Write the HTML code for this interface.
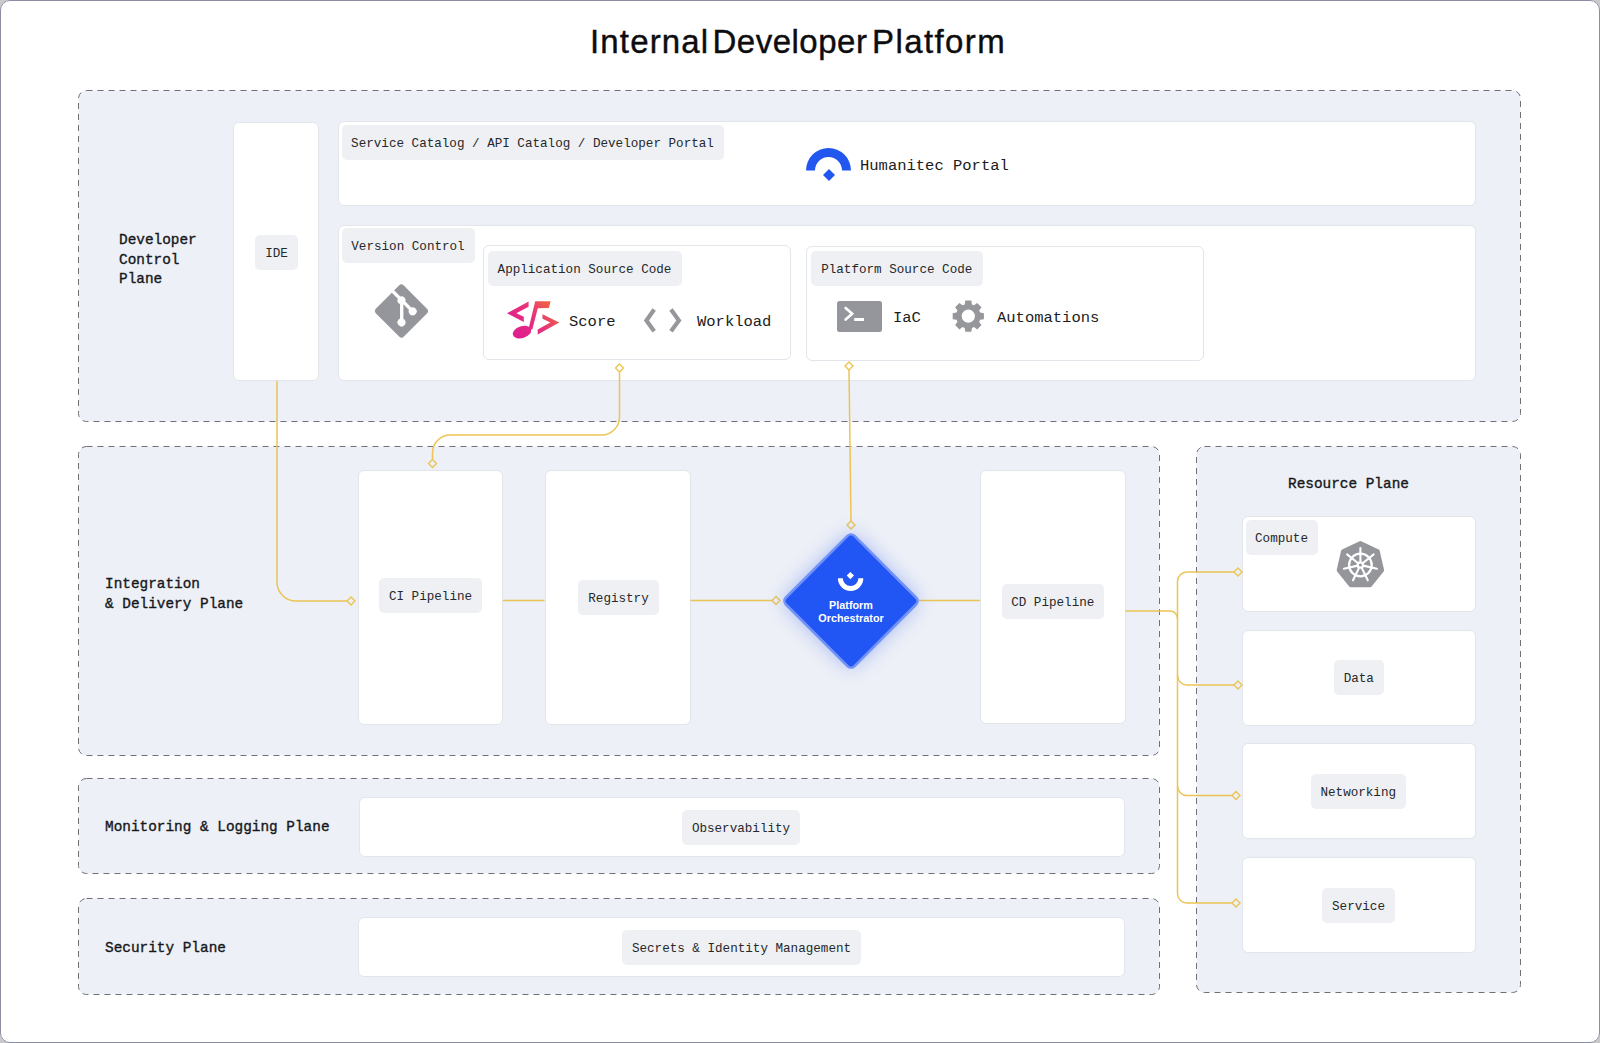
<!DOCTYPE html>
<html><head><meta charset="utf-8">
<style>
html,body{margin:0;padding:0;}
body{width:1600px;height:1043px;position:relative;overflow:hidden;background:#c9c9cc;font-family:"Liberation Mono",monospace;}
#page{position:absolute;left:0;top:0;width:1600px;height:1043px;background:#fff;border-radius:10px;overflow:hidden;}
#frame{position:absolute;left:0;top:0;width:1600px;height:1043px;box-sizing:border-box;border:1px solid #8c8ca2;border-radius:10px;z-index:50;pointer-events:none;}
.abs{position:absolute;}
.box{position:absolute;background:#fff;border:1px solid #e2e5ea;border-radius:6px;box-sizing:border-box;}
.chip{position:absolute;background:#eef0f3;border-radius:5px;box-sizing:border-box;height:35px;line-height:38px;font-size:12.6px;color:#26282c;text-align:center;white-space:nowrap;}
.lbl{position:absolute;font-weight:normal;-webkit-text-stroke:0.35px #16181c;font-size:14.4px;color:#16181c;white-space:nowrap;line-height:19.4px;margin-top:2.3px;}
.big{position:absolute;font-size:15.5px;color:#1b1d21;white-space:nowrap;line-height:20px;margin-top:1.5px;}
svg{position:absolute;left:0;top:0;}
</style></head><body>
<div id="page">
<svg width="1600" height="1043" style="z-index:0">
  <g fill="#edf0f6" stroke="#6f7176" stroke-width="1" stroke-dasharray="6 5">
    <rect x="78.5" y="90.5" width="1442" height="331" rx="8"/>
    <rect x="78.5" y="446.5" width="1081" height="309" rx="8"/>
    <rect x="1196.5" y="446.5" width="324" height="546" rx="8"/>
    <rect x="78.5" y="778.5" width="1081" height="95" rx="8"/>
    <rect x="78.5" y="898.5" width="1081" height="96" rx="8"/>
  </g>
</svg>

<div class="abs" style="left:0;top:18px;width:1600px;height:48px;font-family:'Liberation Sans',sans-serif;font-size:33px;color:#0d0d0f;line-height:48px;-webkit-text-stroke:0.4px #0d0d0f;white-space:nowrap">
<span class="abs" style="left:590px;letter-spacing:1.15px">Internal</span><span class="abs" style="left:712.5px;letter-spacing:0.5px">Developer</span><span class="abs" style="left:872px;letter-spacing:1.4px">Platform</span></div>

<!-- Developer control plane -->
<div class="lbl" style="left:119px;top:229px">Developer<br>Control<br>Plane</div>
<div class="box" style="left:233px;top:122px;width:86px;height:259px"></div>
<div class="chip" style="left:255px;top:235px;width:43px">IDE</div>

<div class="box" style="left:338px;top:121px;width:1137.5px;height:85px"></div>
<div class="chip" style="left:341.5px;top:124.5px;width:382px">Service Catalog / API Catalog / Developer Portal</div>

<div class="box" style="left:338px;top:225px;width:1137.5px;height:156px"></div>
<div class="chip" style="left:341.5px;top:228px;width:133px">Version Control</div>

<div class="box" style="left:482.5px;top:245px;width:308px;height:115px"></div>
<div class="chip" style="left:487.5px;top:251px;width:194px">Application Source Code</div>

<div class="box" style="left:805.5px;top:245.5px;width:398px;height:115.5px"></div>
<div class="chip" style="left:811px;top:251px;width:171.5px">Platform Source Code</div>

<!-- Integration -->
<div class="lbl" style="left:105px;top:573px">Integration<br>&amp; Delivery Plane</div>
<div class="box" style="left:357.5px;top:470px;width:145.5px;height:254.5px"></div>
<div class="chip" style="left:379px;top:578px;width:103px">CI Pipeline</div>
<div class="box" style="left:544.5px;top:470px;width:146px;height:254.5px"></div>
<div class="chip" style="left:578px;top:580px;width:81px">Registry</div>
<div class="box" style="left:980px;top:470px;width:145.5px;height:254px"></div>
<div class="chip" style="left:1001.5px;top:584px;width:102.5px">CD Pipeline</div>

<!-- Resource -->
<div class="lbl" style="left:1288px;top:473px">Resource Plane</div>
<div class="box" style="left:1242px;top:516px;width:233.5px;height:96px"></div>
<div class="chip" style="left:1245.5px;top:519.5px;width:72px">Compute</div>
<div class="box" style="left:1242px;top:629.5px;width:233.5px;height:96px"></div>
<div class="chip" style="left:1334px;top:660px;width:49.5px">Data</div>
<div class="box" style="left:1242px;top:743px;width:233.5px;height:96px"></div>
<div class="chip" style="left:1311px;top:774px;width:94.5px">Networking</div>
<div class="box" style="left:1242px;top:857px;width:233.5px;height:96px"></div>
<div class="chip" style="left:1322px;top:888px;width:73px">Service</div>

<!-- Monitoring / Security -->
<div class="lbl" style="left:105px;top:815.5px">Monitoring &amp; Logging Plane</div>
<div class="box" style="left:358.5px;top:797px;width:766px;height:60px"></div>
<div class="chip" style="left:682px;top:810px;width:118px">Observability</div>
<div class="lbl" style="left:105px;top:936.5px">Security Plane</div>
<div class="box" style="left:357.5px;top:917px;width:767.5px;height:59.5px"></div>
<div class="chip" style="left:622px;top:929.5px;width:239px">Secrets &amp; Identity Management</div>

<div class="big" style="left:860px;top:154px">Humanitec Portal</div>
<div class="big" style="left:569px;top:310px">Score</div>
<div class="big" style="left:697px;top:310px">Workload</div>
<div class="big" style="left:893px;top:306px">IaC</div>
<div class="big" style="left:997px;top:306px">Automations</div>

<svg width="1600" height="1043" style="z-index:10">
  <defs>
    <linearGradient id="sg" x1="0" y1="1" x2="1" y2="0">
      <stop offset="0" stop-color="#e0218f"/>
      <stop offset="0.45" stop-color="#e8267f"/>
      <stop offset="1" stop-color="#f4743a"/>
    </linearGradient>
    <filter id="glow" x="-50%" y="-50%" width="200%" height="200%">
      <feGaussianBlur in="SourceAlpha" stdDeviation="9"/>
      <feFlood flood-color="#4a6cf5" flood-opacity="0.55"/>
      <feComposite operator="in" in2="" />
    </filter>
  </defs>
  <!-- connectors -->
  <g fill="none" stroke="#ecc455" stroke-width="1.5">
    <path d="M277 381 V582 A19 19 0 0 0 296 601 H347"/>
    <path d="M619.5 372 V417 A18 18 0 0 1 601.5 435 H450.5 A18 18 0 0 0 432.5 453 V459.5"/>
    <path d="M849 370 L851 521"/>
    <path d="M503 600.5 H544.5"/>
    <path d="M690.5 600.5 H772"/>
    <path d="M919 600.5 H980"/>
    <path d="M1125.5 611 H1170 A7.5 7.5 0 0 1 1177.5 618.5"/>
    <path d="M1234 572 H1187 A9.5 9.5 0 0 0 1177.5 581.5 V893.5 A9.5 9.5 0 0 0 1187 903 H1232"/>
    <path d="M1177.5 675.5 A9.5 9.5 0 0 0 1187 685 H1234"/>
    <path d="M1177.5 786 A9.5 9.5 0 0 0 1187 795.5 H1232"/>
    <g stroke-width="1.4">
      <path d="M351 597 L355 601 L351 605 L347 601Z"/>
      <path d="M619.5 364 L623.5 368 L619.5 372 L615.5 368Z"/>
      <path d="M432.5 459.5 L436.5 463.5 L432.5 467.5 L428.5 463.5Z"/>
      <path d="M849 362 L853 366 L849 370 L845 366Z"/>
      <path d="M851 521 L855 525 L851 529 L847 525Z"/>
      <path d="M776 596.5 L780 600.5 L776 604.5 L772 600.5Z"/>
      <path d="M1238 568 L1242 572 L1238 576 L1234 572Z"/>
      <path d="M1238 681 L1242 685 L1238 689 L1234 685Z"/>
      <path d="M1236 791.5 L1240 795.5 L1236 799.5 L1232 795.5Z"/>
      <path d="M1236 899 L1240 903 L1236 907 L1232 903Z"/>
    </g>
  </g>

  <!-- Humanitec logo -->
  <g fill="#2157ef">
    <path d="M806 170.5 A22.5 22.5 0 0 1 851 170.5 H842 A13.5 13.5 0 0 0 815 170.5 Z"/>
    <path d="M829 169 L835 175 L829 181 L823 175 Z"/>
  </g>

  <!-- git logo -->
  <g transform="translate(375,284.5) scale(0.576)" fill="#95969b">
    <path d="M90.156 41.965 50.036 1.848a5.918 5.918 0 0 0-8.372 0l-8.328 8.332 10.566 10.566a7.03 7.03 0 0 1 7.23 1.684 7.034 7.034 0 0 1 1.669 7.277l10.187 10.184a7.028 7.028 0 0 1 7.278 1.672 7.04 7.04 0 0 1 0 9.957 7.05 7.05 0 0 1-9.965 0 7.044 7.044 0 0 1-1.528-7.66l-9.5-9.497V59.36a7.04 7.04 0 0 1 1.86 11.29 7.04 7.04 0 0 1-9.957 0 7.04 7.04 0 0 1 0-9.958 7.06 7.06 0 0 1 2.304-1.539V33.926a7.049 7.049 0 0 1-3.82-9.234L29.242 14.272 1.73 41.777a5.925 5.925 0 0 0 0 8.371L41.852 90.27a5.925 5.925 0 0 0 8.37 0l39.934-39.934a5.925 5.925 0 0 0 0-8.371"/>
  </g>

  <!-- score logo -->
  <g transform="translate(490,290)">
    <defs>
      <linearGradient id="sg2" gradientUnits="userSpaceOnUse" x1="28" y1="44" x2="64" y2="14">
        <stop offset="0" stop-color="#e01f8e"/>
        <stop offset="0.5" stop-color="#e6337c"/>
        <stop offset="1" stop-color="#f26a38"/>
      </linearGradient>
    </defs>
    <g fill="url(#sg2)">
      <path d="M38.6 11.6 L38.6 16.7 L26.3 23.2 L33.8 26.8 L33.8 32 L17 23.2 Z"/>
      <path d="M52.5 24.3 L69.3 32.4 L47.7 44.4 L47.7 39.6 L60.3 32.4 L52.5 28.8 Z"/>
      <path d="M45.2 11.2 L60.6 11.2 L58.9 18 L47.8 18.2 L42.3 39.5 L38.4 39.5 Z"/>
      <ellipse cx="32" cy="42.1" rx="9.5" ry="5.9" transform="rotate(-18 32 42.1)"/>
    </g>
  </g>

  <!-- code chevrons -->
  <g fill="none" stroke="#96979b" stroke-width="4.2" stroke-linejoin="miter">
    <path d="M654.2 309.6 L646.4 320.4 L654.2 331.2"/>
    <path d="M671 309.6 L678.9 320.4 L671 331.2"/>
  </g>

  <!-- terminal -->
  <rect x="837" y="301" width="45" height="31" rx="2.5" fill="#95969b"/>
  <g fill="none" stroke="#fff" stroke-width="2.6" stroke-linecap="round" stroke-linejoin="miter">
    <path d="M845.6 308 L852.2 313.8 L845.6 319.6"/>
    <path d="M854.2 319.5 H864" stroke-linecap="butt" stroke-width="3"/>
  </g>

  <!-- gear -->
  <path fill="#96979b" fill-rule="evenodd" d="M964.66 304.45 L965.27 300.59 L971.33 300.59 L971.94 304.45 A12.3 12.3 0 0 1 974.03 305.32 L977.19 303.02 L981.48 307.31 L979.18 310.47 A12.3 12.3 0 0 1 980.05 312.56 L983.91 313.17 L983.91 319.23 L980.05 319.84 A12.3 12.3 0 0 1 979.18 321.93 L981.48 325.09 L977.19 329.38 L974.03 327.08 A12.3 12.3 0 0 1 971.94 327.95 L971.33 331.81 L965.27 331.81 L964.66 327.95 A12.3 12.3 0 0 1 962.57 327.08 L959.41 329.38 L955.12 325.09 L957.42 321.93 A12.3 12.3 0 0 1 956.55 319.84 L952.69 319.23 L952.69 313.17 L956.55 312.56 A12.3 12.3 0 0 1 957.42 310.47 L955.12 307.31 L959.41 303.02 L962.57 305.32 A12.3 12.3 0 0 1 964.66 304.45Z M974.90 316.2 A6.6 6.6 0 1 0 961.70 316.2 A6.6 6.6 0 1 0 974.90 316.2Z"/>

  <!-- k8s -->
  <polygon points="1360.40,543.00 1377.80,551.38 1382.09,570.20 1370.05,585.30 1350.75,585.30 1338.71,570.20 1343.00,551.38" fill="#95969b" stroke="#95969b" stroke-width="4" stroke-linejoin="round"/>
  <g stroke="#fff" fill="none">
    <circle cx="1360.4" cy="565" r="11.3" stroke-width="2.3"/>
    <path d="M1360.40 561.00 L1360.40 548.00 M1363.53 562.51 L1373.69 554.40 M1364.30 565.89 L1376.97 568.78 M1362.14 568.60 L1367.78 580.32 M1358.66 568.60 L1353.02 580.32 M1356.50 565.89 L1343.83 568.78 M1357.27 562.51 L1347.11 554.40" stroke-width="2.1" stroke-linecap="round"/>
    <circle cx="1360.4" cy="565" r="2.7" stroke-width="2.3"/>
  </g>

  <!-- orchestrator -->
  <g>
    <rect x="802.5" y="552.5" width="97" height="97" rx="6" transform="rotate(45 851 601)" fill="#3a63f4" opacity="0.42" style="filter:blur(10px)"/>
    <rect x="802.5" y="552.5" width="97" height="97" rx="5" transform="rotate(45 851 601)" fill="#2256f4" stroke="#7393f6" stroke-width="2.6"/>
    <path fill="#fff" d="M837.9 578.3 A12.7 12.7 0 0 0 863.3 578.3 H858.4 A7.8 7.8 0 0 1 842.8 578.3 Z"/>
    <path fill="#fff" d="M850.3 572 L854 575.6 L850.3 579.2 L846.7 575.6 Z"/>
  </g>
</svg>
<div class="abs" style="z-index:20;left:801px;top:599px;width:100px;text-align:center;font-family:'Liberation Sans',sans-serif;font-weight:bold;font-size:10.8px;line-height:13px;color:#fff">Platform<br>Orchestrator</div>
</div>
<div id="frame"></div>
</body></html>
